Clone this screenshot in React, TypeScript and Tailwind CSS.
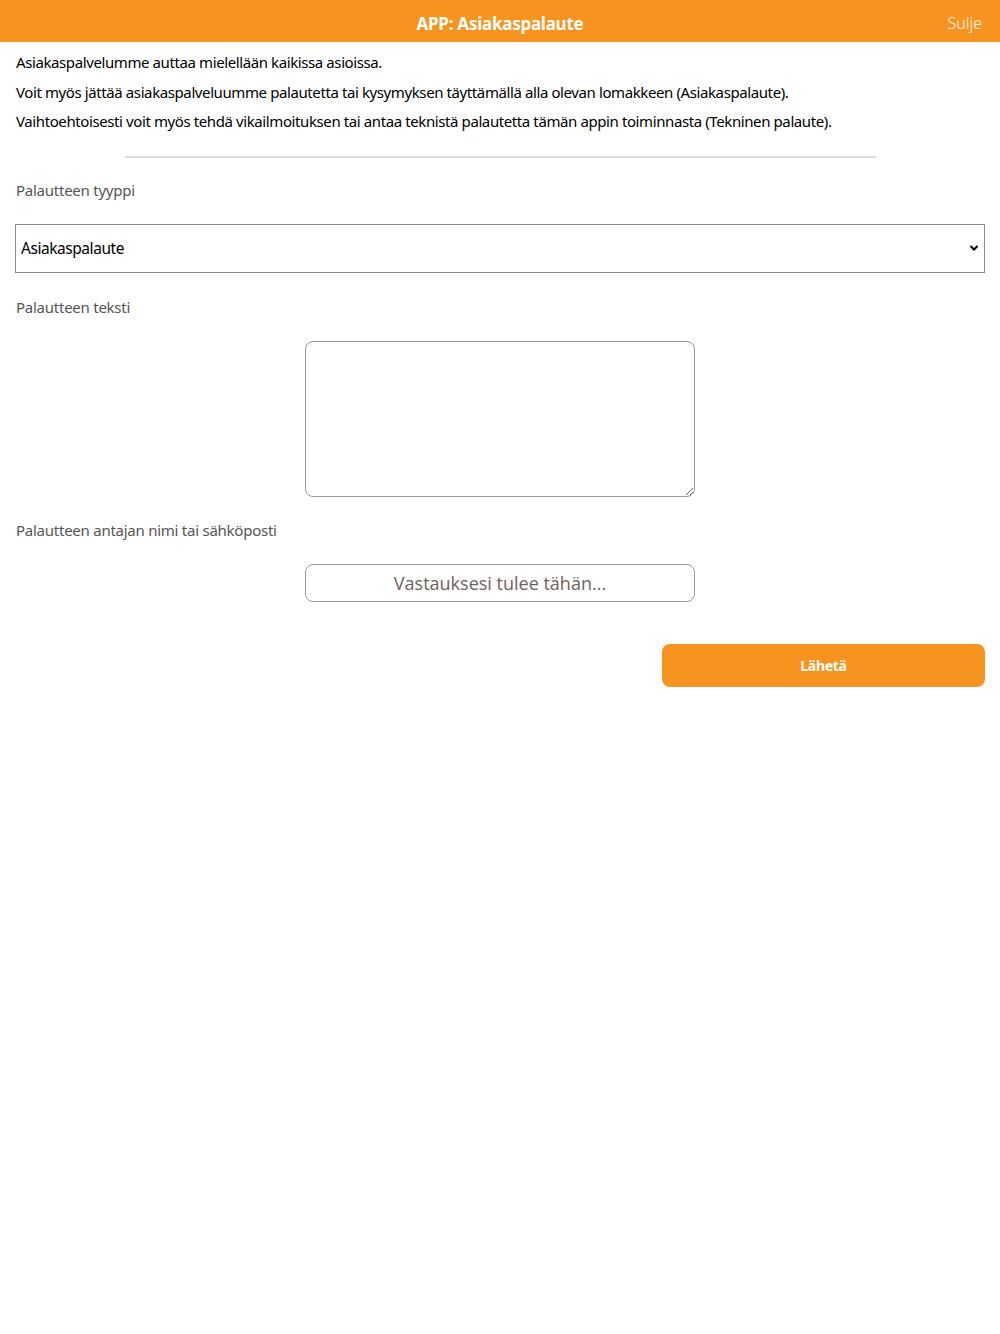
export default function App() {
  return (
    <div className="min-h-[1334px] bg-white font-['Noto_Sans',sans-serif]">
      <header className="relative flex h-[42px] items-center justify-center bg-[#f7941f]">
        <h1 className="pt-[5px] text-[17px] font-bold tracking-[-0.25px] text-white">APP: Asiakaspalaute</h1>
        <button className="absolute right-[18px] top-[11px] text-[16px] font-light text-white/90">Sulje</button>
      </header>

      <div className="px-[16px] pt-[6px] text-[15px] leading-[29.5px] tracking-[-0.4px] text-black">
        <p>Asiakaspalvelumme auttaa mielellään kaikissa asioissa.</p>
        <p>Voit myös jättää asiakaspalveluumme palautetta tai kysymyksen täyttämällä alla olevan lomakkeen (Asiakaspalaute).</p>
        <p>Vaihtoehtoisesti voit myös tehdä vikailmoituksen tai antaa teknistä palautetta tämän appin toiminnasta (Tekninen palaute).</p>
      </div>

      <hr className="mx-auto mt-[19px] w-[751px] border-t-2 border-[#dcdcdc]" />

      <form className="px-[15px]">
        <label className="mt-[21px] block pl-[1px] text-[15px] tracking-[-0.25px] text-[#555]">Palautteen tyyppi</label>
        <div className="relative mt-[23px]">
          <select className="h-[49px] w-full appearance-none border border-[#8a8a8a] bg-white pl-[5px] text-[15.5px] tracking-[-0.45px] text-black">
            <option>Asiakaspalaute</option>
            <option>Tekninen palaute</option>
          </select>
          <svg className="pointer-events-none absolute right-[6px] top-[19px] h-[10px] w-[10px]" viewBox="0 0 10 10">
            <path d="M1.5 3 L5 6.5 L8.5 3" fill="none" stroke="black" strokeWidth="2" />
          </svg>
        </div>

        <label className="mt-[23px] block pl-[1px] text-[15px] tracking-[-0.25px] text-[#555]">Palautteen teksti</label>
        <div className="mt-[22px] flex justify-center">
          <textarea className="h-[156px] w-[390px] rounded-[8px] border border-[#9a9a9a]" />
        </div>

        <label className="mt-[22px] block pl-[1px] text-[15px] tracking-[-0.25px] text-[#555]">Palautteen antajan nimi tai sähköposti</label>
        <div className="mt-[23px] flex justify-center">
          <input
            placeholder="Vastauksesi tulee tähän..."
            className="h-[38px] w-[390px] rounded-[8px] border border-[#9a9a9a] text-center font-['Open_Sans',sans-serif] text-[18px] placeholder:text-[#6f645b]"
          />
        </div>

        <div className="mt-[42px] flex justify-end">
          <button type="button" className="h-[43px] w-[323px] rounded-[8px] bg-[#f7941f] text-[14px] font-bold tracking-[-0.3px] text-white">
            Lähetä
          </button>
        </div>
      </form>
    </div>
  );
}
